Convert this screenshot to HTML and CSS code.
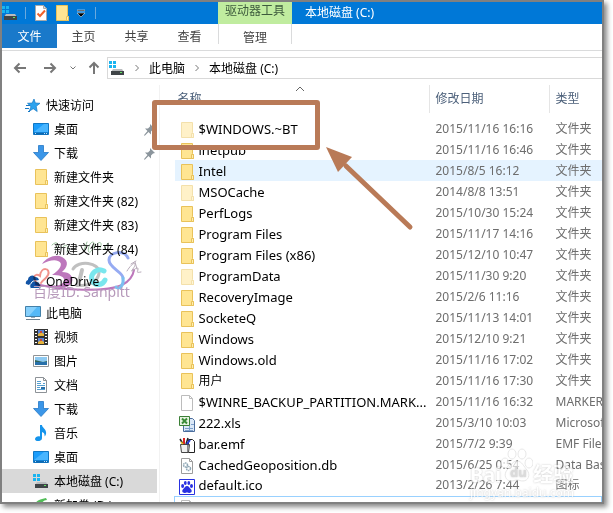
FILE: index.html
```html
<!DOCTYPE html>
<html lang="zh-CN">
<head>
  <meta charset="UTF-8" />
  <meta name="viewport" content="width=device-width, initial-scale=1.0"/>
  <title>本地磁盘 (C:)</title>
  <link rel="stylesheet" href="styles.css">
</head>
<body>
  <!-- Icon set -->
  <svg class="sprite" aria-hidden="true">
    <symbol id="drive" viewBox="0 0 16 16">
      <path fill="#18b4f0" d="M0 1h3v3H0zM4 1h3v3H4zM0 5h3v3H0zM4 5h3v3H4z"/>
      <path fill="#b9bcbe" d="M4 9h9l2 3H2z"/>
      <path fill="#3f4447" d="M2 11h13v4H2z"/>
      <path fill="#5fe25f" d="M11 12h2v1h-2z"/>
    </symbol>
    <symbol id="folder" viewBox="0 0 16 16">
      <path fill="#ffe592" stroke="#e9c25a" d="M2.500 .5h11v10l1 1v4h-12z"/>
      <path fill="#ffefb0" stroke="#e9c25a" d="M12.500 15.500v-4h2v4z"/>
    </symbol>
    <symbol id="check" viewBox="0 0 16 16">
      <path fill="#fff" stroke="#a9a9a9" d="M2.500 .5h8l3 3v12h-11z"/>
      <path fill="#ddd" stroke="#a9a9a9" d="M10.500 .5v3h3z"/>
      <path fill="none" stroke="#f0622c" stroke-width="2" d="M4.500 8.500l2.500 2.500 5-5.500"/>
    </symbol>
    <symbol id="star" viewBox="0 0 16 16">
      <path fill="#2ea3ee" stroke="#1678c4" stroke-width=".7" d="M9 2l1.300 4 4.700.3-3.800 3 1 5.200-4-2.800-4 2.600 1.800-4.600L2.500 6.300l4.700-.3z"/>
      <path stroke="#1678c4" d="M1 8.500h4M0 11.500h4M3 14.500h2"/>
    </symbol>
    <symbol id="desktop" viewBox="0 0 16 16">
      <path fill="#1b9dfb" stroke="#1077c4" d="M.5 2.500h15v11H.5z"/>
      <path fill="#48b5ff" d="M1 11L11 3h4v8z"/>
      <path fill="#0d68b0" d="M1 11.500h14v2H1z"/>
      <path stroke="#bfe4ff" stroke-dasharray="1 1" d="M2 12.500h2M11 12.500h3"/>
    </symbol>
    <symbol id="down" viewBox="0 0 16 16">
      <path fill="#3b96e8" stroke="#2479c6" stroke-width=".8" d="M5.500.5h5v7h5L8 15.500.5 7.500h5z"/>
    </symbol>
    <symbol id="cloud" viewBox="0 0 16 16">
      <path fill="#1254a6" d="M1 11a3 3 0 0 1 2-4 4 4 0 0 1 7-3 4 4 0 0 1 4 3l-5 1-5 4z"/>
      <path fill="#1254a6" stroke="#fff" d="M6 15.500a3 3 0 0 1 0-5 4 4 0 0 1 6-2 3 3 0 0 1 3 3 2.200 2.200 0 0 1 0 4z"/>
    </symbol>
    <symbol id="pc" viewBox="0 0 16 16">
      <path fill="#55b9f7" stroke="#4380a8" d="M.5 1.500h15v10H.5z"/>
      <path fill="#86d0fc" d="M1 2h11L4 11H1z"/>
      <path fill="#9aabb8" d="M6 12h4v1H6z"/>
      <path stroke="#6d8291" d="M1 14.500h14"/>
    </symbol>
    <symbol id="video" viewBox="0 0 16 16">
      <path fill="#333" d="M1 0h14v16H1z"/>
      <path stroke="#fff" stroke-width="2" stroke-dasharray="1 2" d="M3 1v14M13 1v14"/>
      <path fill="#5b83d6" d="M5 1h6v6H5zM5 9h6v6H5z"/>
      <path fill="#e5b33a" d="M5 5l3-2 3 2v2H5zM5 13l3-2 3 2v2H5z"/>
      <path fill="#c94a38" d="M7 2h2v2H7zM7 10h2v2H7z"/>
    </symbol>
    <symbol id="picture" viewBox="0 0 16 16">
      <path fill="#fff" stroke="#8f9396" d="M.5 2.500h15v11H.5z"/>
      <path fill="#8ecaf2" d="M2 4h12v8H2z"/>
      <path fill="#31665c" d="M2 7l4 1 4 1 4-1v1H2z"/>
      <path fill="#2870aa" d="M2 9h12v3H2z"/>
    </symbol>
    <symbol id="doc" viewBox="0 0 16 16">
      <path fill="#fff" stroke="#8d9297" d="M2.500.5h8l3 3v12h-11z"/>
      <path fill="none" stroke="#8d9297" d="M10.500.5v3h3"/>
      <path stroke="#549fd1" d="M4 4.500h4M4 6.500h4M10 6.500h2M4 8.500h8M4 10.500h3M9 10.500h3M4 12.500h8"/>
      <path fill="#276fa9" d="M8 10h4v2H8z"/>
    </symbol>
    <symbol id="music" viewBox="0 0 16 16">
      <path fill="#1594ec" d="M7 0h2c0 3 5 4 4 9-.5 1.500-1 2-1.500 2.500.5-3-1-4-2.500-4.500V13c0 4-7 4-7 1 0-2 3-3.500 5-2.500z"/>
    </symbol>
    <symbol id="newdisk" viewBox="0 0 16 16">
      <path fill="#52bd58" d="M1 8c2-4 6-6 12-7l1 2c-3 0-5 2-6 5z"/>
      <path fill="#8b9194" d="M2 9h13v6H2z"/>
    </symbol>
    <symbol id="pin" viewBox="0 0 16 16">
      <path fill="#8b959c" d="M9 3l5 5-2 .5-2 2v3L7.500 11 4 14.500 3 14.800l.3-1L6.500 10 4 7.500h3l2-2z"/>
    </symbol>
    <symbol id="file" viewBox="0 0 16 16">
      <path fill="#fff" stroke="#bcbcbc" d="M2.500.5h8l3 3v12h-11z"/>
      <path fill="none" stroke="#bcbcbc" d="M10.500.5v3h3"/>
    </symbol>
    <symbol id="xls" viewBox="0 0 16 16">
      <path fill="#dbe8f7" stroke="#4b6d9c" d="M4.500 2.500h9l2 2v11h-11z"/>
      <path stroke="#7ea0cb" d="M6 12.500h8M6 14.500h8M10.500 6v9M12 8.500h3"/>
      <path fill="#e8f4e2" stroke="#3b7f36" d="M.5.5h10v9H.5z"/>
      <path stroke="#3b8c37" stroke-width="2" d="M3 2.500l5 5M8 2.500l-5 5"/>
    </symbol>
    <symbol id="emf" viewBox="0 0 16 16">
      <path fill="#fff" stroke="#222" d="M9.500 2.500h4l2 2v11h-6z"/>
      <path fill="#eee" stroke="#444" d="M1.500 7.500h9l-1 8h-7z"/>
      <path fill="#888" d="M8 8h2l-1 7H8z"/>
      <path stroke="#222" stroke-width="1.500" d="M1 2l3 5M9 1L7 7"/>
      <path stroke="#d22" stroke-width="2" d="M5 1v6"/>
      <path stroke="#2438d8" stroke-width="2" d="M11 3L8 7"/>
      <path stroke="#e7c51c" stroke-width="1.500" d="M2 5l2 2"/>
    </symbol>
    <symbol id="db" viewBox="0 0 16 16">
      <path fill="#fff" stroke="#9c9c9c" d="M2.500.5h8l3 3v12h-11z"/>
      <path fill="none" stroke="#9c9c9c" d="M10.500.5v3h3"/>
      <circle cx="6.500" cy="7" r="2" fill="none" stroke="#8fa7b5" stroke-width="1.500" stroke-dasharray="1.500 .5"/>
      <circle cx="9.500" cy="10.500" r="2" fill="none" stroke="#8fa7b5" stroke-width="1.500" stroke-dasharray="1.500 .5"/>
    </symbol>
    <symbol id="paw" viewBox="0 0 16 16">
      <path fill="#fff" stroke="#2932e1" d="M.5.5h15v15H.5z"/>
      <g fill="#2932e1">
        <ellipse cx="3.600" cy="7" rx="1.500" ry="2"/>
        <ellipse cx="6.300" cy="4" rx="1.400" ry="2"/>
        <ellipse cx="9.800" cy="4" rx="1.400" ry="2"/>
        <ellipse cx="12.500" cy="7" rx="1.500" ry="2"/>
        <path d="M8 7c2 0 2.500 2 4 3.300 1.500 1.700.5 3.700-1.500 3.700-1 0-1.500-.5-2.500-.5s-1.500.5-2.500.5c-2 0-3-2-1.500-3.700C5.500 9 6 7 8 7z"/>
      </g>
    </symbol>
  </svg>

  <div class="window">
    <!-- Title bar -->
    <header class="titlebar">
      <div class="quick">
        <svg class="icon"><use href="#drive"/></svg>
        <i class="sep"></i>
        <button class="icon-btn" aria-label="属性"><svg class="icon"><use href="#check"/></svg></button>
        <button class="icon-btn" aria-label="新建文件夹"><svg class="icon"><use href="#folder"/></svg></button>
        <button class="icon-btn" aria-label="自定义快速访问工具栏"><svg class="caret" viewBox="0 0 8 8"><path fill="#000" stroke="#fff" stroke-width=".5" d="M0 1h8v1H0zM0 4h8L4 8z"/></svg></button>
        <i class="sep"></i>
      </div>
      <div class="tool-title">驱动器工具</div>
      <h1 class="title">本地磁盘 (C:)</h1>
    </header>

    <!-- Ribbon tabs -->
    <nav class="tabs">
      <button class="tab file-tab">文件</button>
      <button class="tab">主页</button>
      <button class="tab">共享</button>
      <button class="tab">查看</button>
      <button class="tab manage-tab">管理</button>
    </nav>

    <!-- Address bar -->
    <div class="navbar">
      <button class="nav-btn" aria-label="后退"><svg class="arrow" viewBox="0 0 14 14"><path d="M13 7H2M6.500 2.500L2 7l4.500 4.500"/></svg></button>
      <button class="nav-btn" aria-label="前进"><svg class="arrow" viewBox="0 0 14 14"><path d="M1 7h11M7.500 2.500L12 7l-4.500 4.500"/></svg></button>
      <button class="nav-btn small" aria-label="最近位置"><svg class="chevron" viewBox="0 0 8 8"><path d="M1.500 2.500L4 5l2.500-2.500"/></svg></button>
      <button class="nav-btn up" aria-label="向上"><svg class="arrow" viewBox="0 0 14 14"><path d="M7 13V2M2.500 6.500L7 2l4.500 4.500"/></svg></button>
      <div class="address">
        <svg class="icon"><use href="#drive"/></svg>
        <svg class="chevron" viewBox="0 0 8 8"><path d="M2.500 1L5.500 4l-3 3"/></svg>
        <a href="#">此电脑</a>
        <svg class="chevron" viewBox="0 0 8 8"><path d="M2.500 1L5.500 4l-3 3"/></svg>
        <a href="#">本地磁盘 (C:)</a>
      </div>
    </div>

    <div class="content">
      <!-- Navigation pane -->
      <aside class="sidebar">
        <ul class="tree">
          <li><a href="#" class="node root"><svg class="icon"><use href="#star"/></svg>快速访问</a></li>
          <li><a href="#" class="node"><svg class="icon"><use href="#desktop"/></svg>桌面<svg class="icon pin"><use href="#pin"/></svg></a></li>
          <li><a href="#" class="node"><svg class="icon"><use href="#down"/></svg>下载<svg class="icon pin"><use href="#pin"/></svg></a></li>
          <li><a href="#" class="node"><svg class="icon"><use href="#folder"/></svg>新建文件夹</a></li>
          <li><a href="#" class="node"><svg class="icon"><use href="#folder"/></svg>新建文件夹 (82)</a></li>
          <li><a href="#" class="node"><svg class="icon"><use href="#folder"/></svg>新建文件夹 (83)</a></li>
          <li><a href="#" class="node"><svg class="icon"><use href="#folder"/></svg>新建文件夹 (84)</a></li>
        </ul>
        <ul class="tree">
          <li><a href="#" class="node root"><svg class="icon"><use href="#cloud"/></svg>OneDrive</a></li>
        </ul>
        <ul class="tree">
          <li><a href="#" class="node root"><svg class="icon"><use href="#pc"/></svg>此电脑</a></li>
          <li><a href="#" class="node"><svg class="icon"><use href="#video"/></svg>视频</a></li>
          <li><a href="#" class="node"><svg class="icon"><use href="#picture"/></svg>图片</a></li>
          <li><a href="#" class="node"><svg class="icon"><use href="#doc"/></svg>文档</a></li>
          <li><a href="#" class="node"><svg class="icon"><use href="#down"/></svg>下载</a></li>
          <li><a href="#" class="node"><svg class="icon"><use href="#music"/></svg>音乐</a></li>
          <li><a href="#" class="node"><svg class="icon"><use href="#desktop"/></svg>桌面</a></li>
          <li><a href="#" class="node selected"><svg class="icon"><use href="#drive"/></svg>本地磁盘 (C:)</a></li>
          <li><a href="#" class="node"><svg class="icon"><use href="#newdisk"/></svg>新加卷 (D:)</a></li>
        </ul>
      </aside>

      <!-- File list -->
      <main class="files">
        <table class="list">
          <colgroup><col class="col-name"><col class="col-date"><col></colgroup>
          <thead>
            <tr>
              <th class="sorted"><div class="head">名称</div><svg class="sort" viewBox="0 0 10 6"><path d="M1 5l4-4 4 4"/></svg></th>
              <th><div class="head">修改日期</div></th>
              <th><div class="head">类型</div></th>
            </tr>
          </thead>
          <tbody>
            <tr><td><svg class="icon faded"><use href="#folder"/></svg>$WINDOWS.~BT</td><td>2015/11/16 16:16</td><td>文件夹</td></tr>
            <tr><td><svg class="icon"><use href="#folder"/></svg>inetpub</td><td>2015/11/16 16:46</td><td>文件夹</td></tr>
            <tr class="hover"><td><svg class="icon"><use href="#folder"/></svg>Intel</td><td>2015/8/5 16:12</td><td>文件夹</td></tr>
            <tr><td><svg class="icon faded"><use href="#folder"/></svg>MSOCache</td><td>2014/8/8 13:51</td><td>文件夹</td></tr>
            <tr><td><svg class="icon"><use href="#folder"/></svg>PerfLogs</td><td>2015/10/30 15:24</td><td>文件夹</td></tr>
            <tr><td><svg class="icon"><use href="#folder"/></svg>Program Files</td><td>2015/11/17 14:16</td><td>文件夹</td></tr>
            <tr><td><svg class="icon"><use href="#folder"/></svg>Program Files (x86)</td><td>2015/12/10 10:47</td><td>文件夹</td></tr>
            <tr><td><svg class="icon faded"><use href="#folder"/></svg>ProgramData</td><td>2015/11/30 9:20</td><td>文件夹</td></tr>
            <tr><td><svg class="icon"><use href="#folder"/></svg>RecoveryImage</td><td>2015/2/6 11:16</td><td>文件夹</td></tr>
            <tr><td><svg class="icon"><use href="#folder"/></svg>SocketeQ</td><td>2015/11/13 14:01</td><td>文件夹</td></tr>
            <tr><td><svg class="icon"><use href="#folder"/></svg>Windows</td><td>2015/12/10 9:21</td><td>文件夹</td></tr>
            <tr><td><svg class="icon"><use href="#folder"/></svg>Windows.old</td><td>2015/11/16 17:02</td><td>文件夹</td></tr>
            <tr><td class="cjk"><svg class="icon"><use href="#folder"/></svg>用户</td><td>2015/11/16 17:30</td><td>文件夹</td></tr>
            <tr><td><svg class="icon"><use href="#file"/></svg>$WINRE_BACKUP_PARTITION.MARK...</td><td>2015/11/16 16:32</td><td>MARKER</td></tr>
            <tr><td><svg class="icon"><use href="#xls"/></svg>222.xls</td><td>2015/3/10 10:03</td><td>Microsoft</td></tr>
            <tr><td><svg class="icon"><use href="#emf"/></svg>bar.emf</td><td>2015/7/2 9:39</td><td>EMF File</td></tr>
            <tr><td><svg class="icon"><use href="#db"/></svg>CachedGeoposition.db</td><td>2015/6/25 0:54</td><td>Data Base</td></tr>
            <tr><td><svg class="icon"><use href="#paw"/></svg>default.ico</td><td>2013/2/26 7:44</td><td>图标</td></tr>
            <tr class="focused"><td><svg class="icon"><use href="#file"/></svg></td><td></td><td></td></tr>
          </tbody>
        </table>
      </main>
    </div>
  </div>

  <!-- Callout -->
  <div class="callout"></div>
  <svg class="pointer" viewBox="0 0 90 86">
    <path fill="none" stroke="#b97a57" stroke-width="5" stroke-linecap="round" d="M20 19L84 80"/>
    <path fill="#b97a57" d="M0 0l26 10-14 15z"/>
  </svg>

  <!-- Author mark -->
  <svg class="logo" viewBox="0 0 124 70">
    <g fill="none" stroke-linecap="round">
      <path stroke="#b25fb0" stroke-width="2" d="M14 49C40 56 85 57 100 50c8-4 11-9 12-15"/>
      <path fill="#b25fb0" d="M20 29c5-7 14-10 20-7 8 4 5 11 0 15 8 0 12 5 10 10-3 8-18 8-29 3 8 1 19 2 21-4 1-5-5-6-12-6 8-5 12-12 6-14-4-2-10 0-16 3z"/>
      <path stroke="#ef7f76" stroke-width="2" d="M18 51c-9-7-6-14 0-10 1-10 11-8 8-1-2 4-5 5-7 8"/>
      <path stroke="#b5b5b5" stroke-width="4" d="M60 35c-1 7-3 11-5 15"/>
      <path stroke="#b5b5b5" stroke-width="3" d="M51 34c5-9 27-7 26 4-1 9-12 14-22 12"/>
      <path stroke="#62e2ea" stroke-width="5" d="M82 36c-7-4-14 3-12 9 3 7 11 5 13 0"/>
      <path stroke="#849cf0" stroke-width="3" d="M106 23c-4-9-19-6-19 2 0 8 14 12 14 18"/>
      <path stroke="#65b4ee" stroke-width="3" d="M101 43c1 7-3 12-7 9"/>
      <path stroke="#a99aab" stroke-width="1" d="M105 36c3-5 7-9 8-7s-5 8-3 7 6-5 6-2-3 4 3 3M109 29l5-3M113 27l2 7"/>
      <path stroke="#88b78b" stroke-width="1" d="M30 10c5-5 8-1 3 4M40 13c4-6 8-1 5 4M62 15l3-8M68 9c4-5 6 0 2 6s-5-1-2-6M75 9c4-4 6 0 2 6M82 14l4-6"/>
    </g>
  </svg>
  <div class="author">百度ID: Sanpitt</div>

  <!-- Site mark -->
  <div class="site">
    <div class="brand"><span>Bai</span><svg class="foot" viewBox="0 0 32 34"><g><ellipse cx="4" cy="15" rx="4" ry="5"/><ellipse cx="11" cy="6" rx="4" ry="5"/><ellipse cx="21" cy="6" rx="4" ry="5"/><ellipse cx="28" cy="15" rx="4" ry="5"/><path d="M16 13c5 0 7 6 10 9 4 5 1 11-4 11-3 0-4-1-6-1s-3 1-6 1c-5 0-8-6-4-11 3-3 5-9 10-9z"/></g><text x="9" y="29">du</text></svg><span>经验</span></div>
    <div class="domain">jingyan.baidu.com</div>
  </div>
</body>
</html>
```
FILE: styles.css
```css
* {
  box-sizing: border-box;
}

body {
  margin: 0;
  padding: 0 9px 9px 0;
  height: 100vh;
  overflow: hidden;
  position: relative;
  background: #fff;
  color: #000;
  font-family: "Noto Sans", "Noto Sans CJK SC", sans-serif;
  font-size: 12px;
}

button {
  font: inherit;
  color: inherit;
  background: none;
  border: none;
  padding: 0;
}

a {
  color: inherit;
  text-decoration: none;
}

.sprite {
  position: absolute;
  width: 0;
  height: 0;
}

.icon {
  width: 16px;
  height: 16px;
  flex: none;
}

.window {
  height: 100%;
  display: flex;
  flex-direction: column;
  overflow: hidden;
  background: #fff;
  border: 2px solid #808080;
  box-shadow: 3px 3px 5px #888;
}

/* Title bar */
.titlebar {
  display: flex;
  flex: none;
  height: 22px;
  background: #0078d7;
  color: #fff;
}

.quick {
  display: flex;
  align-items: center;
  gap: 5px;
  width: 216px;
}

.icon-btn {
  display: flex;
}

.sep {
  width: 1px;
  height: 12px;
  margin: 0 2px;
  background: #6aa9dd;
}

.icon-btn + .sep {
  margin-left: 5px;
}

.caret {
  width: 8px;
  height: 8px;
  margin-left: 2px;
}

.tool-title {
  width: 74px;
  line-height: 18px;
  text-align: center;
  background: #c0ec9f;
  color: #3c5a3c;
}

.title {
  margin: 0 0 0 13px;
  font-size: 12px;
  font-weight: normal;
  line-height: 22px;
}

/* Ribbon tabs */
.tabs {
  display: flex;
  flex: none;
  height: 27px;
  border-bottom: 1px solid #dadbdc;
  color: #444;
}

.tab {
  width: 53px;
  height: 24px;
}

.file-tab {
  width: 55px;
  background: #1979ca;
  color: #fff;
}

.manage-tab {
  width: 74px;
  height: 20px;
  margin-left: 2px;
  padding-top: 4px;
  border: solid #dadbdc;
  border-width: 0 1px;
}

/* Address bar */
.navbar {
  display: flex;
  align-items: center;
  flex: none;
  height: 34px;
}

.nav-btn {
  display: flex;
  margin-left: 11px;
}

.nav-btn + .nav-btn {
  margin-left: 16px;
}

.nav-btn + .small {
  margin-left: 12px;
}

.nav-btn + .up {
  margin-left: 10px;
}

.arrow {
  width: 14px;
  height: 14px;
  fill: none;
  stroke: #777;
  stroke-width: 2;
}

.chevron {
  width: 8px;
  height: 8px;
  fill: none;
  stroke: #777;
}

.address {
  display: flex;
  align-items: center;
  gap: 8px;
  flex: 1;
  height: 22px;
  margin-left: 6px;
  padding-left: 1px;
  border: 1px solid #d9d9d9;
  border-right: none;
}

.content {
  display: flex;
  flex: 1;
  min-height: 0;
}

/* Navigation pane */
.sidebar {
  width: 158px;
  flex: none;
  padding: 8px 2px 0 0;
  border-right: 1px solid #f2f2f2;
}

.tree {
  list-style: none;
  margin: 0 0 8px;
  padding: 0;
}

.node {
  display: flex;
  align-items: center;
  gap: 5px;
  height: 24px;
  padding-left: 31px;
}

.root {
  padding-left: 23px;
}

.selected {
  background: #d9d9d9;
}

.pin {
  margin-left: auto;
}

/* File list */
.files {
  flex: 1;
  min-width: 0;
  padding-left: 14px;
}

.list {
  width: 100%;
  table-layout: fixed;
  border-collapse: collapse;
}

.col-name {
  width: 254px;
}

.col-date {
  width: 120px;
}

.list th {
  position: relative;
  height: 33px;
  padding: 0;
  font-weight: normal;
  text-align: left;
  vertical-align: top;
  color: #4c607a;
}

.head {
  height: 28px;
  padding-left: 6px;
  line-height: 28px;
  border-left: 1px solid #e5e5e5;
}

.sorted .head {
  padding-left: 3px;
  border-left: none;
}

.sort {
  position: absolute;
  top: 1px;
  left: 120px;
  width: 10px;
  height: 6px;
  fill: none;
  stroke: #666;
}

.list td {
  height: 21px;
  padding: 0 0 0 7px;
  line-height: 20px;
  white-space: nowrap;
  overflow: hidden;
  color: #6d6d6d;
}

.list td:first-child {
  padding-left: 4px;
  font-size: 13px;
  color: #000;
}

.list td.cjk:first-child {
  font-size: 12px;
}

.list .icon {
  margin-right: 4px;
  vertical-align: middle;
}

.list .faded {
  opacity: 0.5;
}

.hover {
  background: #e5f3ff;
}

.focused {
  border: 1px solid #99d1ff;
}

/* Marks over the window */
.callout {
  position: absolute;
  top: 100px;
  left: 152px;
  width: 168px;
  height: 50px;
  border: 5px solid #b97a57;
  border-radius: 3px;
}

.pointer {
  position: absolute;
  top: 147px;
  left: 326px;
  width: 90px;
  height: 86px;
}

.logo {
  position: absolute;
  top: 235px;
  left: 22px;
  width: 124px;
  height: 70px;
  opacity: 0.85;
  mix-blend-mode: multiply;
}

.author {
  position: absolute;
  top: 283px;
  left: 33px;
  font-size: 14px;
  line-height: 18px;
  color: #b79abb;
}

.site {
  position: absolute;
  top: 447px;
  left: 470px;
  color: #fff;
  opacity: 0.7;
  text-shadow: 0 0 2px #aaa;
}

.brand {
  display: flex;
  align-items: flex-end;
  height: 40px;
  font-size: 20px;
  font-weight: bold;
  line-height: 24px;
}

.foot {
  width: 32px;
  height: 34px;
  margin-bottom: 5px;
  fill: #fff;
  stroke: #ddd;
}

.foot text {
  fill: #ccc;
  stroke: none;
  font-size: 13px;
}

.domain {
  font-size: 12px;
  line-height: 12px;
}
```
